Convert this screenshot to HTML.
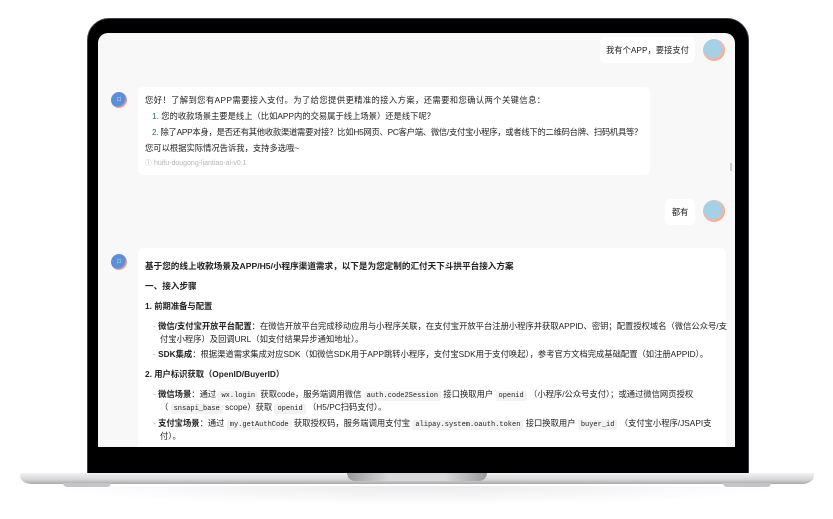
<!DOCTYPE html>
<html><head><meta charset="utf-8"><style>
*{margin:0;padding:0;box-sizing:border-box}
body{width:833px;height:519px;background:#fff;position:relative;overflow:hidden;font-family:"Liberation Sans","Noto Sans CJK SC",sans-serif;color:#222}
.a{position:absolute}
.bezel{left:87px;top:18px;width:662px;height:460px;background:#000;border-radius:22px 22px 6px 6px;border:1.5px solid #3a3f4a}
.screen{left:98px;top:33px;width:637px;height:414px;background:#f8f8f9;border-radius:10px 10px 0 0;overflow:hidden}
.base{left:20px;top:473px;width:794px;height:11px;background:linear-gradient(#f2f2f3,#d6d6d8 60%,#a9a9ac);border-radius:2px 2px 12px 12px/2px 2px 8px 8px}
.notch{left:347px;top:473px;width:140px;height:8px;background:linear-gradient(90deg,#9a9a9c,#d8d8da 30%,#d8d8da 70%,#9a9a9c);border-radius:0 0 8px 8px}
.foot{top:483px;width:48px;height:4px;background:#c4c4c6;border-radius:0 0 4px 4px}
.shadow{left:40px;top:486px;width:754px;height:20px;background:radial-gradient(ellipse at center top,rgba(0,0,0,.08),rgba(0,0,0,0) 70%)}
.bub{background:#fff;border-radius:5px;font-size:8.3px;line-height:16px}
.ua{width:22px;height:22px;border-radius:50%;background:radial-gradient(circle at 45% 45%,#a6d0e4 55%,#f4b6b6 56%,#f0a46a 80%)}
.ba{width:16px;height:16px;border-radius:50%;background:radial-gradient(circle at 40% 40%,#5d8fd6 55%,#f3a0a0 70%);color:#fff;font-size:6px;text-align:center;line-height:16px}
b{font-weight:bold}
code{font-family:"Liberation Mono",monospace;font-size:7px;background:#f2f2f3;padding:1px 3px;border-radius:2px}
.t{position:absolute;white-space:nowrap;font-size:8.3px}
</style></head><body>
<div class="a shadow"></div>
<div class="a bezel"></div>
<div class="a base"></div>
<div class="a notch"></div>
<div class="a foot" style="left:63px"></div>
<div class="a foot" style="left:723px"></div>
<div class="a screen">
  <div class="a bub" style="left:502px;top:4px;width:95px;height:26px;padding:5px 0;text-align:center;white-space:nowrap">我有个APP，要接支付</div>
  <div class="a ua" style="left:605px;top:6px"></div>
  <div class="a ba" style="left:13px;top:59px">□</div>
  <div class="a bub" style="left:40px;top:54px;width:512px;height:88px">
    <div class="t" style="left:7px;top:5px;letter-spacing:0.4px">您好！了解到您有APP需要接入支付。为了给您提供更精准的接入方案，还需要和您确认两个关键信息：</div>
    <div class="t" style="left:14px;top:21px"><span style="color:#2a6f6f">1.</span> 您的收款场景主要是线上（比如APP内的交易属于线上场景）还是线下呢？</div>
    <div class="t" style="left:14px;top:37px;letter-spacing:-0.25px"><span style="color:#2a6f6f">2.</span> 除了APP本身，是否还有其他收款渠道需要对接？比如H5网页、PC客户端、微信/支付宝小程序，或者线下的二维码台牌、扫码机具等？</div>
    <div class="t" style="left:7px;top:53px">您可以根据实际情况告诉我，支持多选哦~</div>
    <div class="t" style="left:7px;top:69px;color:#b5b5b8;font-size:7px">ⓘ huifu-dougong-liantiao-ai-v0.1</div>
  </div>
  <div class="a" style="left:632px;top:130px;width:2px;height:8px;background:#ccc"></div>
  <div class="a bub" style="left:567px;top:166px;width:30px;height:26px;padding:5px 0;text-align:center">都有</div>
  <div class="a ua" style="left:605px;top:167px"></div>
  <div class="a ba" style="left:13px;top:221px">□</div>
  <div class="a bub" style="left:40px;top:215px;width:588px;height:220px">
    <div class="t" style="left:7px;top:10px;font-weight:bold;font-size:8.6px">基于您的线上收款场景及APP/H5/小程序渠道需求，以下是为您定制的汇付天下斗拱平台接入方案</div>
    <div class="t" style="left:7px;top:30px;font-weight:bold;font-size:8.6px">一、接入步骤</div>
    <div class="t" style="left:7px;top:50px;font-weight:bold">1. 前期准备与配置</div>
    <div class="t" style="left:15px;top:70px"><span style="color:#aaa">-</span> <b>微信/支付宝开放平台配置</b>：在微信开放平台完成移动应用与小程序关联，在支付宝开放平台注册小程序并获取APPID、密钥；配置授权域名（微信公众号/支</div>
    <div class="t" style="left:22px;top:83px">付宝小程序）及回调URL（如支付结果异步通知地址）。</div>
    <div class="t" style="left:15px;top:98px"><span style="color:#aaa">-</span> <b>SDK集成</b>：根据渠道需求集成对应SDK（如微信SDK用于APP跳转小程序，支付宝SDK用于支付唤起），参考官方文档完成基础配置（如注册APPID）。</div>
    <div class="t" style="left:7px;top:118px;font-weight:bold">2. 用户标识获取（OpenID/BuyerID）</div>
    <div class="t" style="left:15px;top:138px"><span style="color:#aaa">-</span> <b>微信场景</b>：通过 <code>wx.login</code> 获取code，服务端调用微信 <code>auth.code2Session</code> 接口换取用户 <code>openid</code> （小程序/公众号支付）；或通过微信网页授权</div>
    <div class="t" style="left:22px;top:151px">（ <code>snsapi_base</code> scope）获取 <code>openid</code> （H5/PC扫码支付）。</div>
    <div class="t" style="left:15px;top:167px"><span style="color:#aaa">-</span> <b>支付宝场景</b>：通过 <code>my.getAuthCode</code> 获取授权码，服务端调用支付宝 <code>alipay.system.oauth.token</code> 接口换取用户 <code>buyer_id</code> （支付宝小程序/JSAPI支</div>
    <div class="t" style="left:22px;top:180px">付）。</div>
  </div>
</div>
</body></html>
